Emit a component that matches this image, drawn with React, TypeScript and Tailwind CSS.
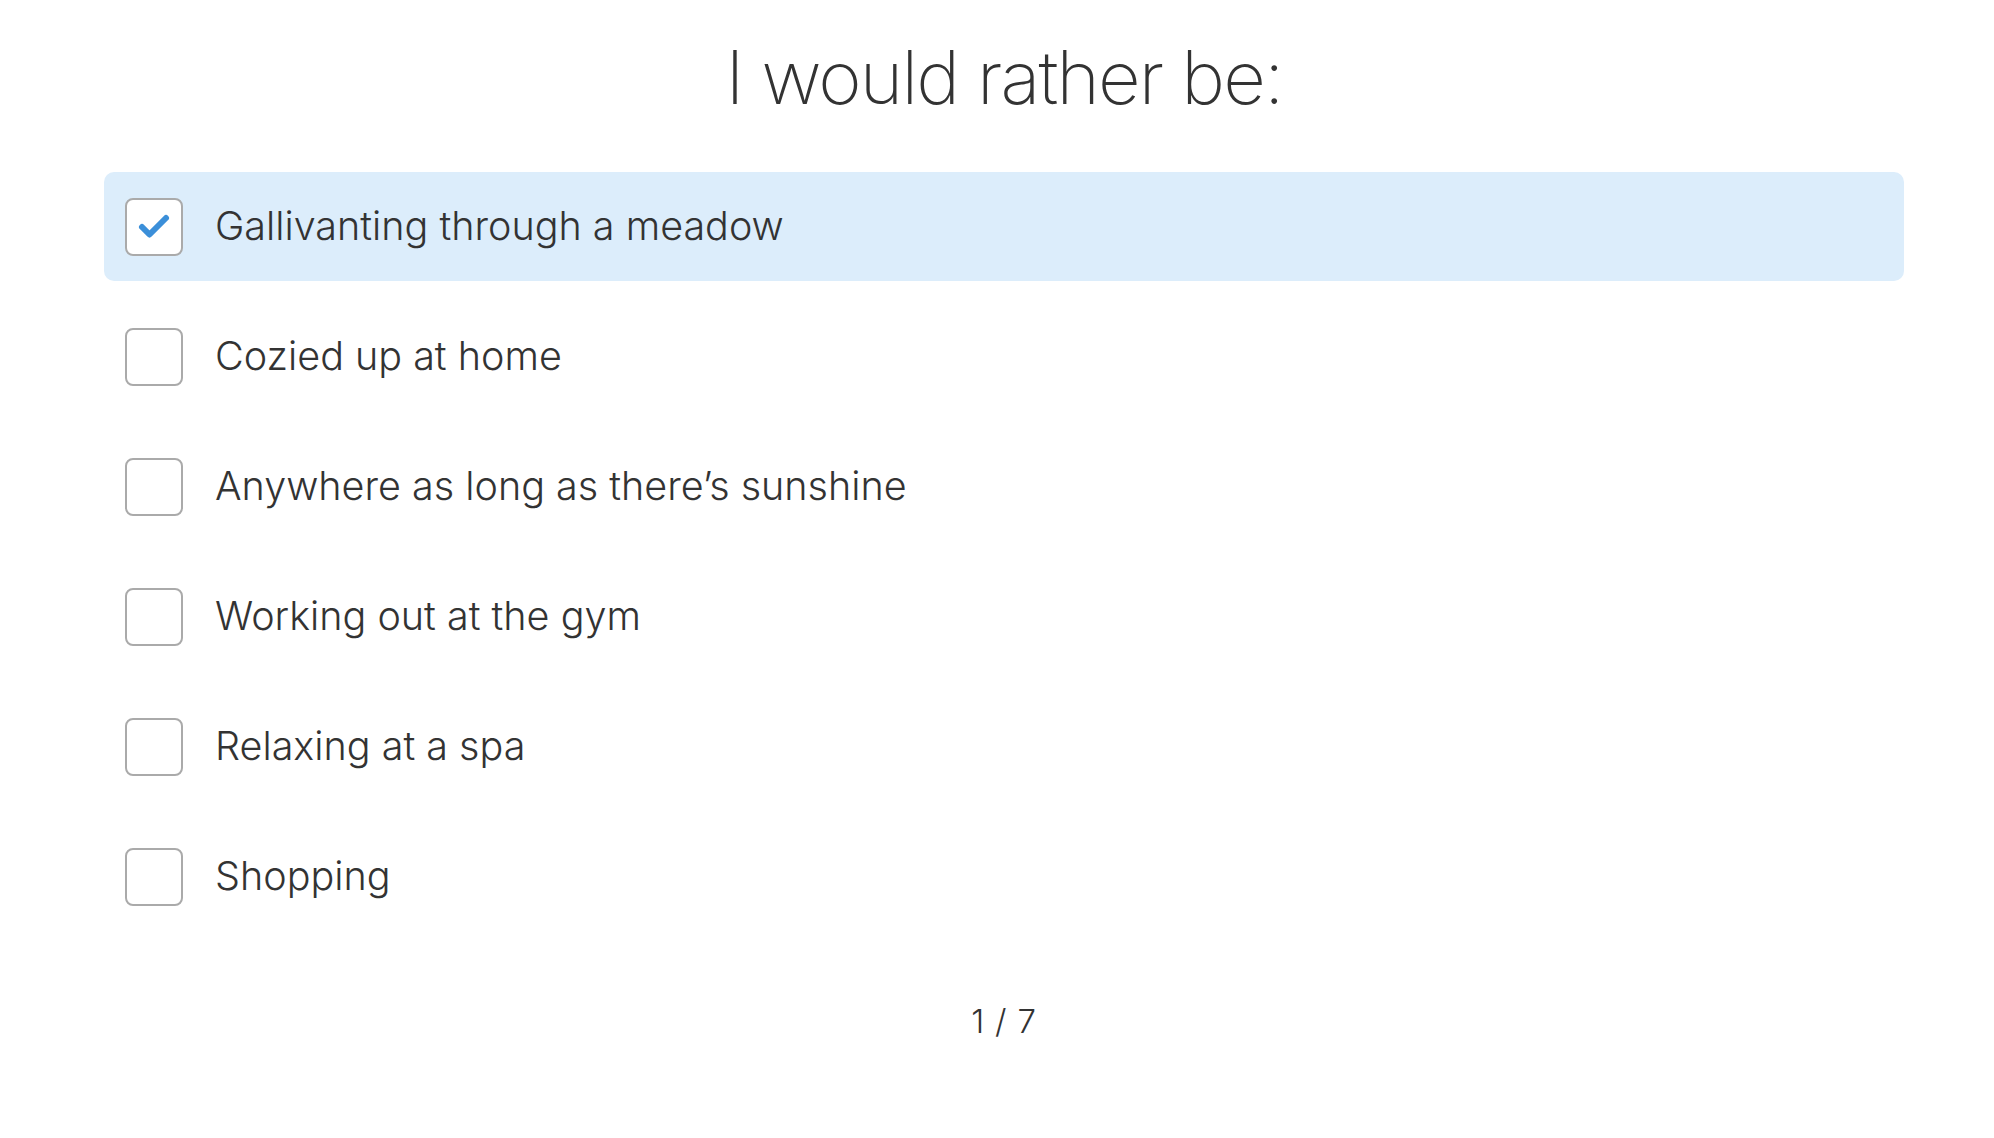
import { Check } from "lucide-react";

const options = [
  "Gallivanting through a meadow",
  "Cozied up at home",
  "Anywhere as long as there\u2019s sunshine",
  "Working out at the gym",
  "Relaxing at a spa",
  "Shopping",
];

export default function App() {
  const selected = 0;
  return (
    <div className="min-h-screen bg-white text-[#333333] font-['Inter',sans-serif] font-light">
      <div className="flex flex-col pl-[104px] pr-[90px]">
        <h1 className="text-center text-[74px] leading-none font-extralight pt-[40px] pb-[58px] tracking-tight">
          I would rather be:
        </h1>
        <div className="flex flex-col gap-[21px]">
          {options.map((label, i) => (
            <div
              key={label}
              className={`flex items-center h-[109px] px-[21px] rounded-[10px] ${
                i === selected ? "bg-[#dcedfb]" : ""
              }`}
            >
              <div className="w-[58px] h-[58px] rounded-[8px] border-2 border-[#aaaaaa] bg-white flex items-center justify-center flex-shrink-0">
                {i === selected && <Check size={36} strokeWidth={4} className="text-[#3b8fd9]" />}
              </div>
              <span className="ml-[32px] text-[39.5px]">{label}</span>
            </div>
          ))}
        </div>
        <div className="text-center text-[33px] tracking-wide mt-[66px]">1 / 7</div>
      </div>
    </div>
  );
}
